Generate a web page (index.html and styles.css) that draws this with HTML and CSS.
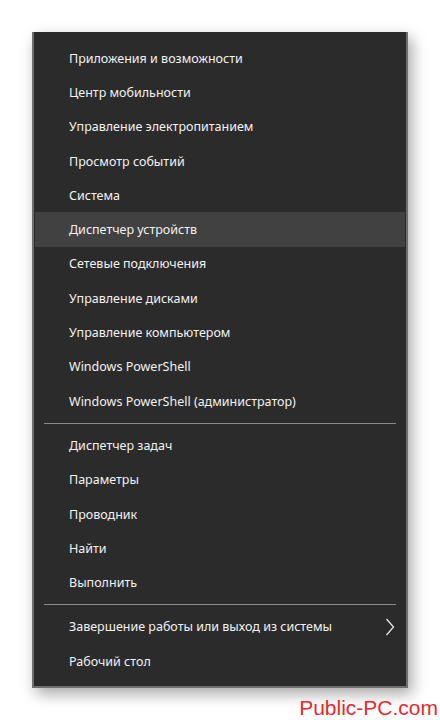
FILE: index.html
```html
<!DOCTYPE html>
<html lang="ru">
<head>
<meta charset="utf-8">
<link rel="stylesheet" href="styles.css">
</head>
<body>
<div class="page">
  <div class="menu">
    <div class="group">
      <div class="item">Приложения и возможности</div>
      <div class="item">Центр мобильности</div>
      <div class="item">Управление электропитанием</div>
      <div class="item">Просмотр событий</div>
      <div class="item">Система</div>
      <div class="item active">Диспетчер устройств</div>
      <div class="item">Сетевые подключения</div>
      <div class="item">Управление дисками</div>
      <div class="item">Управление компьютером</div>
      <div class="item">Windows PowerShell</div>
      <div class="item">Windows PowerShell (администратор)</div>
    </div>
    <div class="sep"></div>
    <div class="group">
      <div class="item">Диспетчер задач</div>
      <div class="item">Параметры</div>
      <div class="item">Проводник</div>
      <div class="item">Найти</div>
      <div class="item">Выполнить</div>
    </div>
    <div class="sep"></div>
    <div class="group">
      <div class="item">Завершение работы или выход из системы
        <svg class="chev" width="10" height="18" viewBox="0 0 10 18"><path d="M1.5 1 L8.5 9 L1.5 17" fill="none" stroke="#e6e6e6" stroke-width="1.3"/></svg>
      </div>
      <div class="item">Рабочий стол</div>
    </div>
  </div>
  <div class="mark">Public-PC.com</div>
</div>
</body>
</html>
```
FILE: styles.css
```css
html, body {
  margin: 0;
  padding: 0;
  background: #ffffff;
}
.page {
  position: relative;
  width: 440px;
  height: 720px;
  padding: 32px 0 0 32px;
  box-sizing: border-box;
  font-family: "Noto Sans", "Open Sans", sans-serif;
}
.menu {
  width: 376px;
  box-sizing: border-box;
  background: #2b2b2b;
  border-left: 2px solid #6f6f6f;
  border-right: 2px solid #6f6f6f;
  border-bottom: 2px solid #6f6f6f;
  padding: 9px 1px 8px 1px;
  box-shadow: 4px 6px 14px rgba(0, 0, 0, 0.35);
}
.group {
  display: flex;
  flex-direction: column;
}
.item {
  height: 34.3px;
  display: flex;
  align-items: center;
  padding-left: 34px;
  padding-right: 10px;
  color: #f2f2f2;
  font-size: 12.5px;
  position: relative;
}
.item.active {
  background: #414141;
}
.chev {
  margin-left: auto;
}
.sep {
  height: 1px;
  background: #8a8a8a;
  margin: 4.5px 9px 4.5px 9px;
}
.mark {
  position: absolute;
  right: 2px;
  bottom: 0;
  color: #e8282e;
  font-family: "Liberation Sans", Arial, sans-serif;
  font-size: 21px;
  line-height: 25px;
}
```
